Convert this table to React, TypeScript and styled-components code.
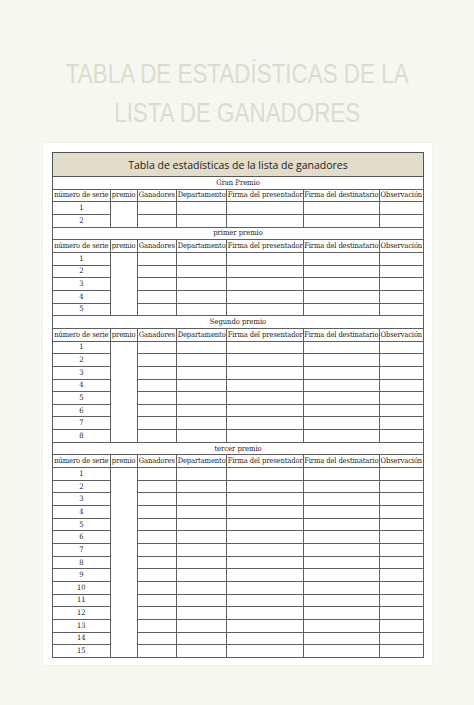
import React from "react";
import styled, { createGlobalStyle } from "styled-components";

const GlobalStyle = createGlobalStyle`
  html, body {
    margin: 0;
    padding: 0;
    background: #f7f7f2;
  }
`;

type Section = {
  label: string;
  rows: number;
};

const sections: Section[] = [
  { label: "Gran Premio", rows: 2 },
  { label: "primer premio", rows: 5 },
  { label: "Segundo premio", rows: 8 },
  { label: "tercer premio", rows: 15 },
];

const headers = [
  "número de serie",
  "premio",
  "Ganadores",
  "Departamento",
  "Firma del presentador",
  "Firma del destinatario",
  "Observación",
];

const colWidths = [57.3, 27.3, 39, 50.7, 76.3, 76, 44];

const Page = styled.div`
  width: 474px;
  height: 705px;
  display: flex;
  flex-direction: column;
  align-items: center;
  overflow: hidden;
`;

const Title = styled.h1`
  margin: 0;
  padding-top: 54px;
  font-family: "Liberation Sans", Arial, sans-serif;
  font-weight: normal;
  font-size: 28px;
  line-height: 39px;
  color: #dcdccb;
  text-align: center;
  white-space: nowrap;
`;

const TitleLine = styled.span`
  display: block;
  transform: scaleX(0.8);
`;

const Paper = styled.div`
  margin-top: 11px;
  margin-left: 1px;
  width: 370.6px;
  padding: 9px 9px 7px;
  background: #ffffff;
  box-shadow: 0 0 2px rgba(0, 0, 0, 0.05);
`;

const Table = styled.table`
  width: 370.6px;
  border-collapse: collapse;
  table-layout: fixed;
  border: 1.5px solid #444;
  font-family: "DejaVu Serif Condensed", "DejaVu Serif", serif;
  font-size: 7.5px;
  color: #1c1c1c;
`;

const TitleCell = styled.td`
  height: 23px;
  padding: 0;
  background: #e2dcca;
  border: 1px solid #555;
  font-family: "Open Sans", sans-serif;
  font-size: 10.5px;
  color: #222;
  text-align: center;
  vertical-align: middle;
`;

const Cell = styled.td`
  height: 11.66px;
  padding: 0;
  border: 1px solid #5e5e5e;
  text-align: center;
  vertical-align: middle;
  line-height: 10px;
  white-space: nowrap;
  overflow: hidden;
`;

const HeadCell = styled(Cell)`
  letter-spacing: -0.1px;
`;

const SectionRows: React.FC<{ section: Section }> = ({ section }) => (
  <>
    <tr>
      <Cell colSpan={7}>{section.label}</Cell>
    </tr>
    <tr>
      {headers.map((h) => (
        <HeadCell key={h}>{h}</HeadCell>
      ))}
    </tr>
    {Array.from({ length: section.rows }, (_, i) => (
      <tr key={i}>
        <Cell>{i + 1}</Cell>
        {i === 0 && <Cell rowSpan={section.rows} />}
        <Cell />
        <Cell />
        <Cell />
        <Cell />
        <Cell />
      </tr>
    ))}
  </>
);

export default function App() {
  return (
    <Page>
      <GlobalStyle />
      <Title>
        <TitleLine>TABLA DE ESTADÍSTICAS DE LA</TitleLine>
        <TitleLine>LISTA DE GANADORES</TitleLine>
      </Title>
      <Paper>
        <Table>
          <colgroup>
            {colWidths.map((w, i) => (
              <col key={i} style={{ width: w }} />
            ))}
          </colgroup>
          <tbody>
            <tr>
              <TitleCell colSpan={7}>
                Tabla de estadísticas de la lista de ganadores
              </TitleCell>
            </tr>
            {sections.map((s) => (
              <SectionRows key={s.label} section={s} />
            ))}
          </tbody>
        </Table>
      </Paper>
    </Page>
  );
}
